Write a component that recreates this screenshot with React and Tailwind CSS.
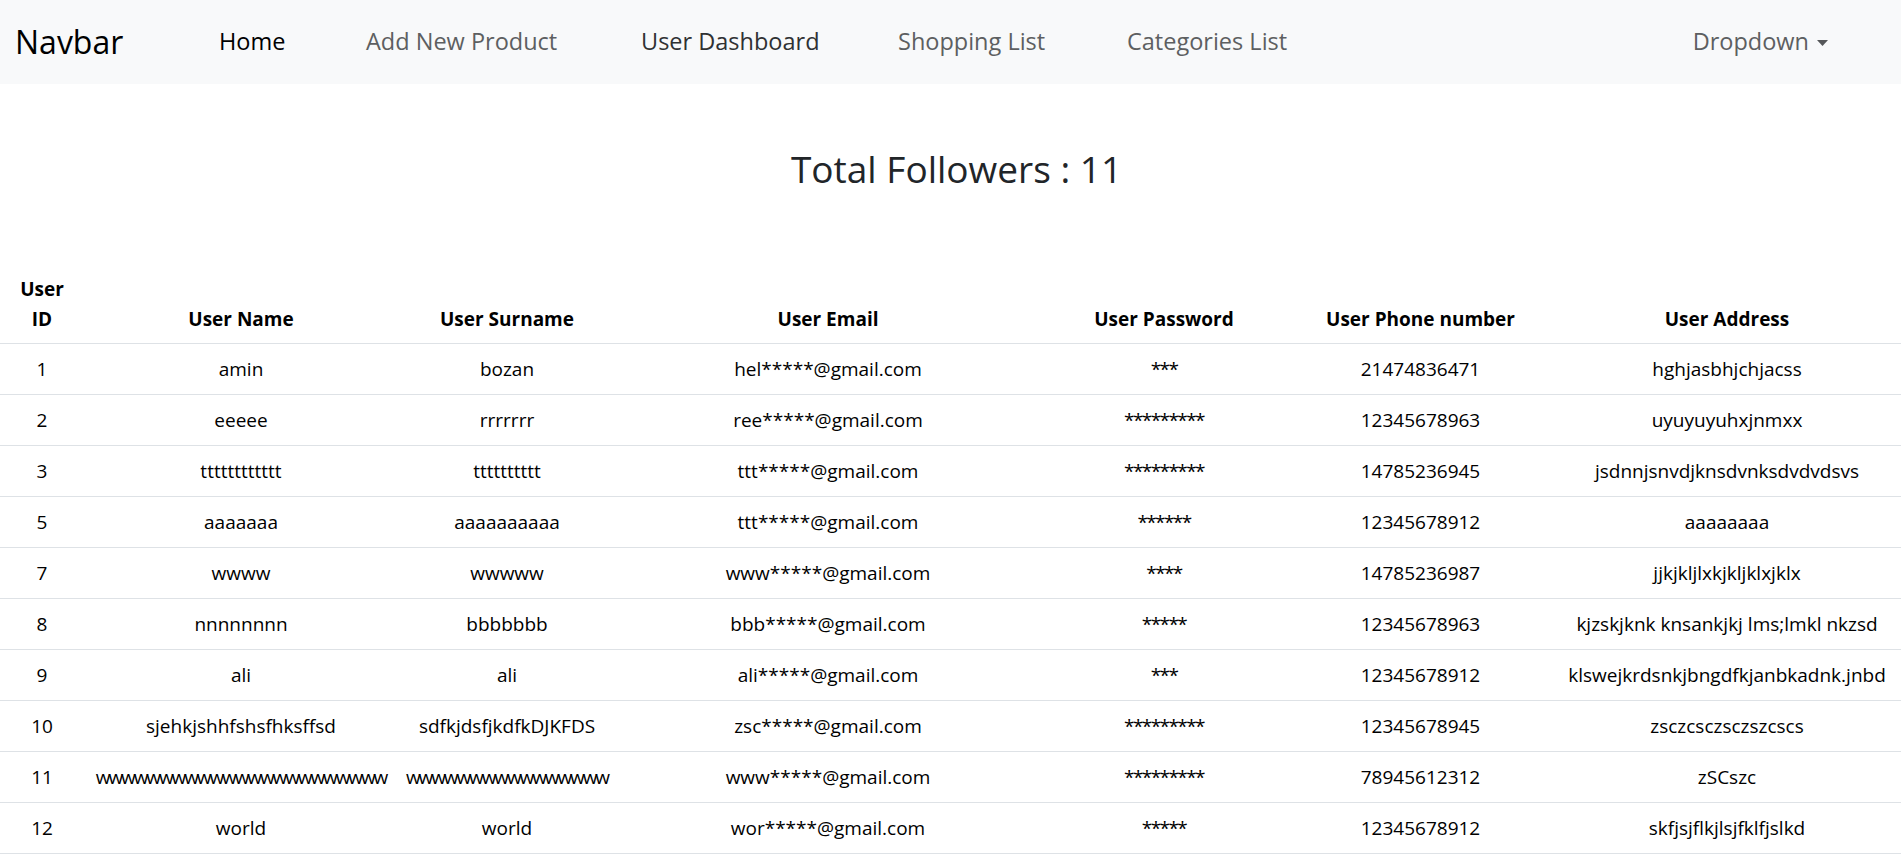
import React from "react";

const rows = [
  ["1", "amin", "bozan", "hel*****@gmail.com", "***", "21474836471", "hghjasbhjchjacss"],
  ["2", "eeeee", "rrrrrrr", "ree*****@gmail.com", "*********", "12345678963", "uyuyuyuhxjnmxx"],
  ["3", "tttttttttttt", "tttttttttt", "ttt*****@gmail.com", "*********", "14785236945", "jsdnnjsnvdjknsdvnksdvdvdsvs"],
  ["5", "aaaaaaa", "aaaaaaaaaa", "ttt*****@gmail.com", "******", "12345678912", "aaaaaaaa"],
  ["7", "wwww", "wwwww", "www*****@gmail.com", "****", "14785236987", "jjkjkljlxkjkljklxjklx"],
  ["8", "nnnnnnnn", "bbbbbbb", "bbb*****@gmail.com", "*****", "12345678963", "kjzskjknk knsankjkj lms;lmkl nkzsd"],
  ["9", "ali", "ali", "ali*****@gmail.com", "***", "12345678912", "klswejkrdsnkjbngdfkjanbkadnk.jnbd"],
  ["10", "sjehkjshhfshsfhksffsd", "sdfkjdsfjkdfkDJKFDS", "zsc*****@gmail.com", "*********", "12345678945", "zsczcsczsczszcscs"],
  ["11", "wwwwwwwwwwwwwwwwwwwwwww", "wwwwwwwwwwwwwwww", "www*****@gmail.com", "*********", "78945612312", "zSCszc"],
  ["12", "world", "world", "wor*****@gmail.com", "*****", "12345678912", "skfjsjflkjlsjfklfjslkd"],
];

const headers = ["User ID", "User Name", "User Surname", "User Email", "User Password", "User Phone number", "User Address"];

function cellClass(c, i) {
  if (i === 4) return "whitespace-nowrap px-[6px] py-[10px] tracking-[-1.6px]";
  if (/^w{10,}$/.test(c)) return "whitespace-nowrap px-[6px] py-[10px] tracking-[-2.1px]";
  return "whitespace-nowrap px-[6px] py-[10px]";
}

export default function App() {
  return (
    <div className="min-h-screen bg-white text-[#212529]" style={{ fontFamily: '"Segoe UI", "Open Sans", sans-serif' }}>
      <nav className="flex h-[84px] items-center bg-[#f8f9fa] pl-[15px] pr-[73px]">
        <div className="w-[204px] text-[32px] leading-none text-black">Navbar</div>
        <div className="flex items-center text-[23.5px] leading-none">
          <a className="w-[147px] text-black">Home</a>
          <a className="w-[275px] text-[#5d5f61]">Add New Product</a>
          <a className="w-[257px] text-[#2f3133]">User Dashboard</a>
          <a className="w-[229px] text-[#5d5f61]">Shopping List</a>
          <a className="text-[#5d5f61]">Categories List</a>
        </div>
        <div className="ml-auto flex items-center text-[23.5px] leading-none text-[#5d5f61]">
          <span>Dropdown</span>
          <svg width="11" height="6" viewBox="0 0 11 6" className="ml-[8px] mt-[2px]">
            <path d="M0 0 L11 0 L5.5 6 Z" fill="#555759" />
          </svg>
        </div>
      </nav>

      <h2 className="mt-[62px] pl-[12px] text-center text-[37px] leading-[46px] text-[#212529]">Total Followers : 11</h2>

      <table className="mt-[72px] w-full table-fixed border-collapse text-center text-[19px] leading-[30px] text-black">
        <colgroup>
          <col className="w-[84px]" />
          <col className="w-[314px]" />
          <col className="w-[218px]" />
          <col className="w-[424px]" />
          <col className="w-[248px]" />
          <col className="w-[265px]" />
          <col className="w-[348px]" />
        </colgroup>
        <thead>
          <tr className="border-b border-[#dee2e6]">
            {headers.map((h, i) => (
              <th key={h} className={`pb-[9px] pt-[10px] align-bottom font-bold ${i === 0 ? "px-[18px]" : "px-[6px]"}`}>
                {h}
              </th>
            ))}
          </tr>
        </thead>
        <tbody>
          {rows.map((r) => (
            <tr key={r[0]} className="border-b border-[#dee2e6]">
              {r.map((c, i) => (
                <td key={i} className={cellClass(c, i)}>
                  {c}
                </td>
              ))}
            </tr>
          ))}
        </tbody>
      </table>
    </div>
  );
}
